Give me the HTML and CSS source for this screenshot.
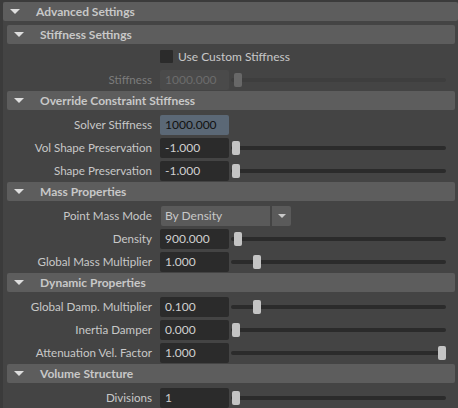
FILE: index.html
```html
<!DOCTYPE html>
<html>
<head>
<meta charset="utf-8">
<link rel="stylesheet" href="styles.css">
</head>
<body>
<div class="panel">
  <div class="hdr top"><span class="tri"></span><span class="htext">Advanced Settings</span></div>
  <div class="body">
    <section class="sec first">
      <div class="hdr sub"><span class="tri"></span><span class="htext">Stiffness Settings</span></div>
      <div class="rows">
        <div class="row"><span class="label"></span><span class="checkwrap"><span class="check"></span><span class="ctext">Use Custom Stiffness</span></span></div>
        <div class="row disabled"><span class="label">Stiffness</span><span class="field">1000.000</span><div class="slider"><span class="track"></span><span class="knob" style="left:3px"></span></div></div>
      </div>
    </section>
    <section class="sec">
      <div class="hdr sub"><span class="tri"></span><span class="htext">Override Constraint Stiffness</span></div>
      <div class="rows">
        <div class="row"><span class="label">Solver Stiffness</span><span class="field selected">1000.000</span></div>
        <div class="row"><span class="label">Vol Shape Preservation</span><span class="field">-1.000</span><div class="slider"><span class="track"></span><span class="knob" style="left:1px"></span></div></div>
        <div class="row"><span class="label">Shape Preservation</span><span class="field">-1.000</span><div class="slider"><span class="track"></span><span class="knob" style="left:1px"></span></div></div>
      </div>
    </section>
    <section class="sec">
      <div class="hdr sub"><span class="tri"></span><span class="htext">Mass Properties</span></div>
      <div class="rows">
        <div class="row"><span class="label">Point Mass Mode</span><span class="dropdown"><span class="dtext">By Density</span><span class="dbtn"><span class="dtri"></span></span></span></div>
        <div class="row"><span class="label">Density</span><span class="field">900.000</span><div class="slider"><span class="track"></span><span class="knob" style="left:3px"></span></div></div>
        <div class="row"><span class="label">Global Mass Multiplier</span><span class="field">1.000</span><div class="slider"><span class="track"></span><span class="knob" style="left:22px"></span></div></div>
      </div>
    </section>
    <section class="sec">
      <div class="hdr sub"><span class="tri"></span><span class="htext">Dynamic Properties</span></div>
      <div class="rows">
        <div class="row"><span class="label">Global Damp. Multiplier</span><span class="field">0.100</span><div class="slider"><span class="track"></span><span class="knob" style="left:22px"></span></div></div>
        <div class="row"><span class="label">Inertia Damper</span><span class="field">0.000</span><div class="slider"><span class="track"></span><span class="knob" style="left:1px"></span></div></div>
        <div class="row"><span class="label">Attenuation Vel. Factor</span><span class="field">1.000</span><div class="slider"><span class="track"></span><span class="knob" style="left:207px"></span></div></div>
      </div>
    </section>
    <section class="sec">
      <div class="hdr sub"><span class="tri"></span><span class="htext">Volume Structure</span></div>
      <div class="rows">
        <div class="row"><span class="label">Divisions</span><span class="field">1</span><div class="slider"><span class="track"></span><span class="knob" style="left:1px"></span></div></div>
      </div>
    </section>
  </div>
</div>
</body>
</html>
```

FILE: styles.css
```css
html, body {
  margin: 0;
  padding: 0;
  background: #3b3b3b;
  height: 100%;
  overflow: hidden;
}
body {
  font-family: "Lato", "Liberation Sans", sans-serif;
  font-size: 12px;
  color: #c8c8c8;
}
.panel {
  margin: 2px 0 0 3px;
  background: #444444;
  height: 406px;
}
.hdr {
  display: flex;
  align-items: center;
  height: 19px;
  background: #5d5d5d;
  border-radius: 2px;
  font-weight: bold;
  color: #c8c8c8;
}
.hdr .tri {
  width: 0;
  height: 0;
  border-left: 5px solid transparent;
  border-right: 5px solid transparent;
  border-top: 5px solid #dedede;
}
.top {
  padding-left: 7px;
}
.top .htext {
  margin-left: 16px;
}
.body {
  padding: 4px 3px 0 4px;
}
.sub {
  padding-left: 7px;
}
.sub .htext {
  margin-left: 16px;
}
.rows {
  padding-top: 3px;
}
.sec.first .rows {
  padding-top: 1px;
}
.row {
  display: grid;
  grid-template-columns: 145px 69px 1fr;
  column-gap: 8px;
  align-items: center;
  height: 23px;
}
.label {
  text-align: right;
  white-space: nowrap;
  font-size: 11.6px;
}
.field {
  height: 20px;
  line-height: 20px;
  background: #2b2b2b;
  border-radius: 2px;
  padding-left: 5px;
  box-sizing: border-box;
  color: #d0d0d0;
}
.field.selected {
  background: #5b6876;
  color: #111;
}
.checkwrap {
  grid-column: 2 / 4;
  display: flex;
  align-items: center;
}
.check {
  width: 13px;
  height: 13px;
  background: #2b2b2b;
  border-radius: 1px;
}
.ctext {
  margin-left: 5px;
}
.slider {
  position: relative;
  height: 20px;
  margin-left: -6px;
  margin-right: 9px;
  display: flex;
  align-items: center;
}
.track {
  flex: 1;
  height: 4px;
  background: #2b2b2b;
  border-radius: 2px;
}
.knob {
  position: absolute;
  top: 3px;
  width: 8px;
  height: 14px;
  background: #c4c4c4;
  border-radius: 2px;
}
.disabled .label { color: #7c7c7c; }
.disabled .field {
  background: #4a4a4a;
  color: #6c6c6c;
}
.disabled .track { background: #3e3e3e; }
.disabled .knob { background: #686868; }
.dropdown {
  grid-column: 2 / 4;
  display: flex;
  height: 20px;
  margin-left: 1px;
}
.dtext {
  width: 109px;
  background: #5a5a5a;
  line-height: 20px;
  padding-left: 4px;
  box-sizing: border-box;
  border-radius: 2px 0 0 2px;
}
.dbtn {
  width: 19px;
  margin-left: 2px;
  background: #5a5a5a;
  border-radius: 0 2px 2px 0;
  display: flex;
  align-items: center;
  justify-content: center;
}
.dtri {
  width: 0;
  height: 0;
  border-left: 4px solid transparent;
  border-right: 4px solid transparent;
  border-top: 4px solid #c8c8c8;
}
```
